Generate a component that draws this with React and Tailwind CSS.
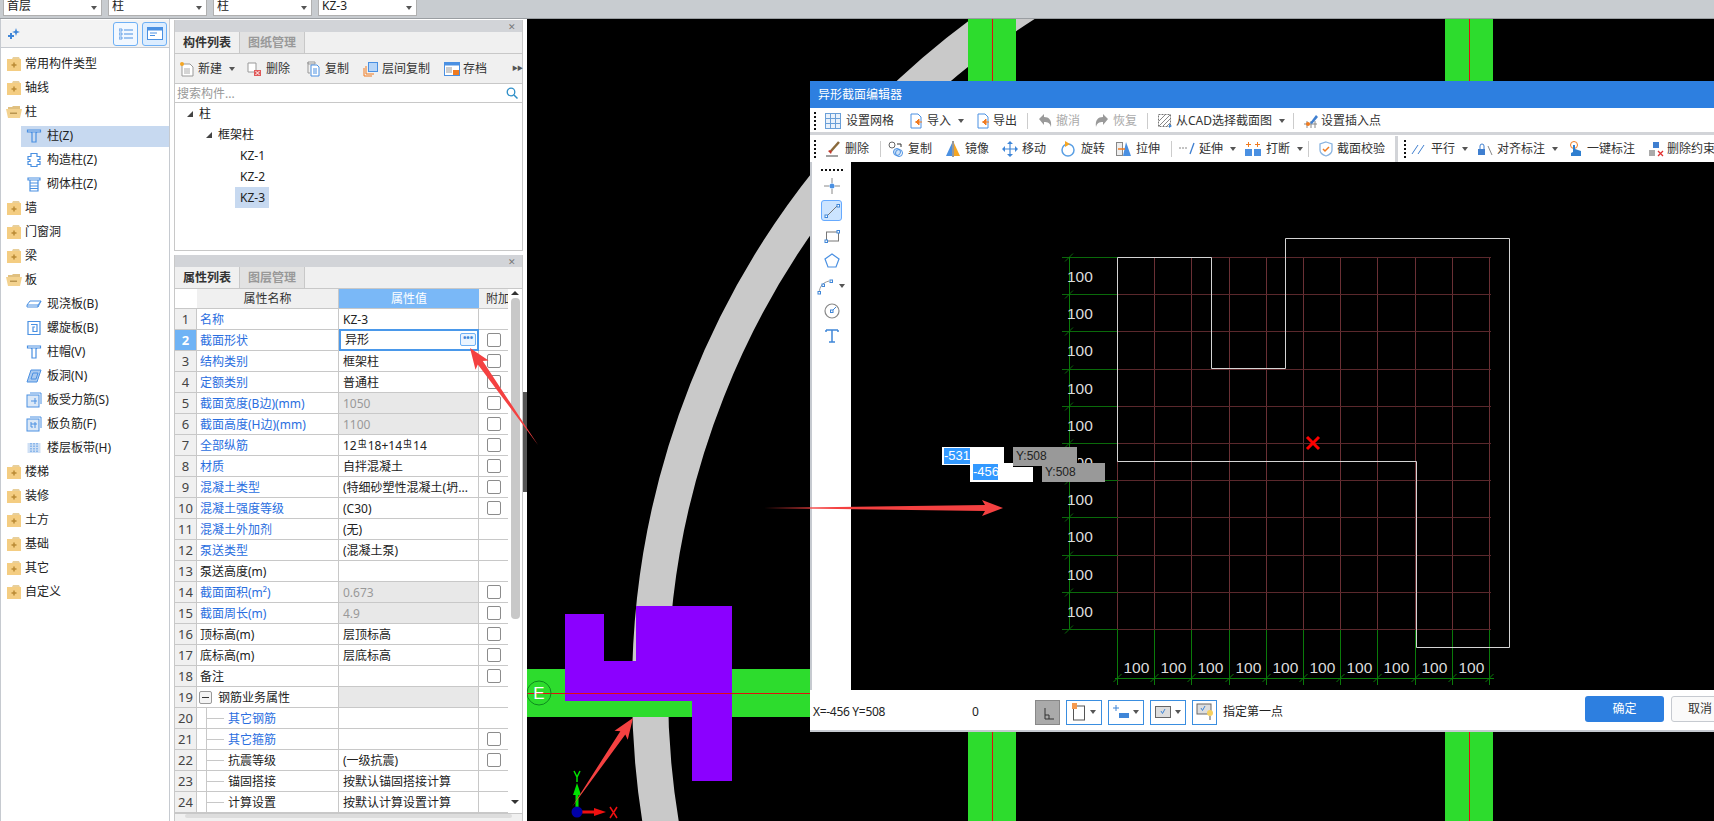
import React from 'react';

const FONT = "font-['Noto_Sans','Noto_Sans_CJK_SC',sans-serif]";

const Caret = ({ className = '' }) => (
  <span className={`inline-block w-0 h-0 border-x-[3px] border-x-transparent border-t-[4px] border-t-[#555] ${className}`} />
);

const Folder = ({ open }) => (
  <svg width="16" height="14" viewBox="0 0 16 14" className="shrink-0">
    {open ? (
      <>
        <path d="M2 2h4l1-1h7v9H2z" fill="#e0c080" />
        <path d="M0 4h16l-2 9H2z" fill="#f3d28f" />
        <rect x="4" y="7.500" width="7" height="1.500" fill="#b99550" />
      </>
    ) : (
      <>
        <path d="M1 2h5l1-2h6l1 2v1H1z" fill="#e8cf9a" />
        <rect x="1" y="2" width="14" height="12" fill="#f4cd82" />
        <path d="M5.500 8h5M8 5.500v5" stroke="#b98a35" strokeWidth="1.500" />
      </>
    )}
  </svg>
);

const b = '#4a90e2';

const leafIcons = {
  col: <><path d="M1.500 2h13v2h-13zM5 4l1 1v9h4V5l1-1" fill="none" stroke={b} strokeWidth="1.200" /></>,
  gz: <><path d="M5 1.500h6v3h3v3h-2v2h2v3h-3v2H5v-2H2v-3h2v-2H2v-3h3z" fill="none" stroke={b} strokeWidth="1.200" /></>,
  qt: <><path d="M2 2h12v2H2zM4 4h8v11H4zM4 7h8M4 10h8M4 12.500h8" fill="none" stroke={b} strokeWidth="1.200" /></>,
  xj: <><path d="M1 9l3-4h11l-1.500 3-1.500 3H1zM1 9h11l3-4M12 9v2" fill="none" stroke={b} strokeWidth="1" /></>,
  lx: <><path d="M2 1.500h12v13H2zM5 4.500h6v7H7V7h2" fill="none" stroke={b} strokeWidth="1.200" /></>,
  bd: <><path d="M1 14L5 2h10l-4 12zM5 11l2-6h5l-2 6z" fill="#a9c9ef" stroke={b} strokeWidth="1" /></>,
  sl: <><rect x="1" y="3" width="12" height="12" fill="#dbe8f7" stroke={b} /><path d="M4 1h11v11M5 9h6M9 6v6" fill="none" stroke={b} /></>,
  fj: <><rect x="1" y="3" width="12" height="12" fill="#dbe8f7" stroke={b} /><path d="M4 1h11v11M5 6v5h2M9 6v6M5 8h6" fill="none" stroke={b} /></>,
  bdai: <><rect x="1.500" y="3" width="13" height="10" fill="#cfe0f5" /><path d="M5 3v10M8 3v10M11 3v10" stroke={b} strokeDasharray="1.500 1" /></>,
};

const Leaf = ({ name }) => (
  <svg width="16" height="16" viewBox="0 0 16 16" className="shrink-0">{leafIcons[name]}</svg>
);

const TreeGroup = ({ label, open }) => (
  <div className="h-6 flex items-center pl-[5px] gap-[3px] text-xs text-[#222]">
    <Folder open={open} />
    <span>{label}</span>
  </div>
);

const TreeLeaf = ({ label, icon, active }) => (
  <div className="h-6 pl-[20px] flex items-center">
    <div className={`h-[21px] w-full flex items-center pl-[5px] gap-[5px] text-xs text-[#222] ${active ? 'bg-[#c7d9f0]' : ''}`}>
      <Leaf name={icon} />
      <span>{label}</span>
    </div>
  </div>
);

const LeftPanel = () => (
  <div className="w-[170px] shrink-0 border-l border-r border-[#c6cad0] bg-white">
    <div className="h-[28px] mt-px border-b border-[#c6cad0] bg-[#f3f3f3] flex items-center relative">
      <svg width="14" height="12" viewBox="0 0 14 12" className="ml-[6px]">
        <path d="M9 0l1 3 3 1-3 1-1 3-1-3-3-1 3-1zM3 5h2v2h2v2H5v2H3V9H1V7h2z" fill="#3f86d8" />
      </svg>
      <div className="ml-auto mr-[2px] flex gap-[4px]">
        <div className="w-[25px] h-[24px] rounded-[3px] border border-[#6eb0f5] bg-[#f2f8ff] flex items-center justify-center">
          <svg width="14" height="12" viewBox="0 0 14 12"><path d="M0 1h3v2H0zM0 5h3v2H0zM0 9h3v2H0z" fill="none" stroke="#4a90e2" strokeWidth=".8" /><path d="M5 2h9M5 6h9M5 10h9" stroke="#4a90e2" strokeWidth="1" /></svg>
        </div>
        <div className="w-[25px] h-[24px] rounded-[3px] border border-[#6eb0f5] bg-[#dcedff] flex items-center justify-center">
          <svg width="16" height="13" viewBox="0 0 16 13"><rect x=".5" y=".5" width="15" height="12" fill="#fff" stroke="#4a90e2" /><rect x=".5" y=".5" width="15" height="3" fill="#4a90e2" /><path d="M3 6h7M3 8.500h5" stroke="#4a90e2" /></svg>
        </div>
      </div>
    </div>
    <div className="pt-[4px]">
      <TreeGroup label="常用构件类型" />
      <TreeGroup label="轴线" />
      <TreeGroup label="柱" open />
      <TreeLeaf label="柱(Z)" icon="col" active />
      <TreeLeaf label="构造柱(Z)" icon="gz" />
      <TreeLeaf label="砌体柱(Z)" icon="qt" />
      <TreeGroup label="墙" />
      <TreeGroup label="门窗洞" />
      <TreeGroup label="梁" />
      <TreeGroup label="板" open />
      <TreeLeaf label="现浇板(B)" icon="xj" />
      <TreeLeaf label="螺旋板(B)" icon="lx" />
      <TreeLeaf label="柱帽(V)" icon="col" />
      <TreeLeaf label="板洞(N)" icon="bd" />
      <TreeLeaf label="板受力筋(S)" icon="sl" />
      <TreeLeaf label="板负筋(F)" icon="fj" />
      <TreeLeaf label="楼层板带(H)" icon="bdai" />
      <TreeGroup label="楼梯" />
      <TreeGroup label="装修" />
      <TreeGroup label="土方" />
      <TreeGroup label="基础" />
      <TreeGroup label="其它" />
      <TreeGroup label="自定义" />
    </div>
  </div>
);

const PanelHead = ({ first, second }) => (
  <>
    <div className="h-[12px] bg-[#d2d4d8] flex items-center justify-end pr-[6px] text-[9px] leading-none text-[#777]">✕</div>
    <div className="h-[22px] bg-[#f0f0f0] border-b border-[#c8c8c8] flex text-xs">
      <div className="w-[65px] flex items-center justify-center font-bold text-[#333] border-r border-[#c8c8c8]">{first}</div>
      <div className="w-[65px] flex items-center justify-center font-bold text-[#999] bg-[#e2e2e2] border-r border-[#c8c8c8]">{second}</div>
    </div>
  </>
);

const rows = [
  ['1', '名称', 'KZ-3', 'b', 0, 0],
  ['2', '截面形状', '异形', 'b', 0, 1],
  ['3', '结构类别', '框架柱', 'b', 0, 1],
  ['4', '定额类别', '普通柱', 'b', 0, 1],
  ['5', '截面宽度(B边)(mm)', '1050', 'b', 1, 1],
  ['6', '截面高度(H边)(mm)', '1100', 'b', 1, 1],
  ['7', '全部纵筋', 'rebar', 'b', 0, 1],
  ['8', '材质', '自拌混凝土', 'b', 0, 1],
  ['9', '混凝土类型', '(特细砂塑性混凝土(坍...', 'b', 0, 1],
  ['10', '混凝土强度等级', '(C30)', 'b', 0, 1],
  ['11', '混凝土外加剂', '(无)', 'b', 0, 0],
  ['12', '泵送类型', '(混凝土泵)', 'b', 0, 0],
  ['13', '泵送高度(m)', '', 'k', 0, 0],
  ['14', '截面面积(m²)', '0.673', 'b', 1, 1],
  ['15', '截面周长(m)', '4.9', 'b', 1, 1],
  ['16', '顶标高(m)', '层顶标高', 'k', 0, 1],
  ['17', '底标高(m)', '层底标高', 'k', 0, 1],
  ['18', '备注', '', 'k', 0, 1],
  ['19', '钢筋业务属性', '', 'g', 1, 0],
  ['20', '其它钢筋', '', 'cb', 0, 0],
  ['21', '其它箍筋', '', 'cb', 0, 1],
  ['22', '抗震等级', '(一级抗震)', 'ck', 0, 1],
  ['23', '锚固搭接', '按默认锚固搭接计算', 'ck', 0, 0],
  ['24', '计算设置', '按默认计算设置计算', 'ck', 0, 0],
];

const Row = ({ r }) => {
  const [num, name, val, kind, gray, check] = r;
  const sel = num === '2';
  const child = kind === 'cb' || kind === 'ck';
  return (
    <div className="h-[21px] flex border-b border-[#c8c8c8] text-xs">
      <div className={`w-[22px] shrink-0 flex items-center justify-center pt-px border-r border-[#c8c8c8] text-[13px] ${sel ? 'bg-[#6fb3f5] text-white font-bold' : 'bg-[#f0f0f0] text-[#444]'}`}>{num}</div>
      <div className={`w-[142px] shrink-0 relative flex items-center pt-px border-r border-[#c8c8c8] whitespace-nowrap ${kind === 'b' || kind === 'cb' ? 'text-[#2a6ee0]' : 'text-[#222]'} ${child ? 'pl-[31px]' : kind === 'g' ? 'pl-[21px]' : 'pl-[3px]'}`}>
        {kind === 'g' && (
          <span className="absolute left-[2px] top-[4px] w-[13px] h-[13px] rounded-[2px] border border-[#999] bg-[#f4f4f4] flex items-center justify-center">
            <span className="w-[7px] h-px bg-[#333]" />
          </span>
        )}
        {child && (
          <>
            <span className="absolute left-[9px] top-0 bottom-[-1px] w-px bg-[#c8c8c8]" />
            <span className="absolute left-[9px] top-[10px] w-[18px] h-px bg-[#c8c8c8]" />
          </>
        )}
        {name}
      </div>
      <div className={`w-[140px] shrink-0 flex items-center whitespace-nowrap overflow-hidden ${gray ? 'bg-[#e8e8e8] text-[#999]' : 'text-[#222]'} ${sel ? 'border-2 border-[#4a98ea] -mt-px h-[22px] pl-[4px] relative' : 'pl-[4px] pt-px border-r border-[#c8c8c8]'}`}>
        {val === 'rebar' ? (
          <span>12<span className="text-[9px] align-[3px] mx-[1px]">虫</span>18+14<span className="text-[9px] align-[3px] mx-[1px]">虫</span>14</span>
        ) : val}
        {sel && (
          <span className="absolute right-[1px] top-[2px] w-[16px] h-[13px] rounded-[2px] border border-[#6eb0f5] bg-[#eaf4ff] text-[#3f86d8] text-[9px] leading-[8px] text-center font-bold">•••</span>
        )}
      </div>
      <div className="w-[29px] shrink-0 flex items-center justify-center">
        {!!check && <span className="w-[14px] h-[14px] rounded-[2px] border border-[#8c8c8c] bg-white" />}
      </div>
    </div>
  );
};

const ToolIcon = ({ children }) => (
  <svg width="16" height="16" viewBox="0 0 16 16" className="shrink-0">{children}</svg>
);

const ListTool = ({ w, icon, label, caret }) => (
  <div className={`flex items-center shrink-0 text-xs text-[#333] ${w}`}>
    {icon}
    <span className="ml-[3px] whitespace-nowrap">{label}</span>
    {caret && <Caret className="ml-[7px]" />}
  </div>
);

const MiddlePanel = () => (
  <div className="w-[357px] shrink-0 bg-white flex">
    <div className="w-[4px]" />
    <div className="w-[349px] flex flex-col">
      <div className="h-[231px] mt-px border border-t-0 border-[#c8c8c8] flex flex-col">
        <PanelHead first="构件列表" second="图纸管理" />
        <div className="h-[30px] bg-[#f0f0f0] border-b border-[#c8c8c8] flex items-center pl-[4px]">
          <ListTool w="w-[68px]" label="新建" caret icon={<ToolIcon><path d="M3 3h8l3 3v9H3z" fill="#fff" stroke="#999" /><path d="M5 8h6M5 10h6M5 12h6" stroke="#aaa" /><circle cx="3" cy="3" r="2" fill="#f5a623" /></ToolIcon>} />
          <ListTool w="w-[59px]" label="删除" icon={<ToolIcon><path d="M1 2h8v9H1z" fill="#fff" stroke="#999" /><rect x="7" y="9" width="7" height="6" fill="#e05a5a" /><path d="M8.500 10l4 4M12.500 10l-4 4" stroke="#fff" /></ToolIcon>} />
          <ListTool w="w-[57px]" label="复制" icon={<ToolIcon><path d="M2 1h7v2H2zM2 1v11h2" fill="none" stroke="#999" /><path d="M5 4h6l2 2v9H5z" fill="#fff" stroke="#4a90e2" /><path d="M7 8h4M7 10h4M7 12h4" stroke="#4a90e2" /></ToolIcon>} />
          <ListTool w="w-[81px]" label="层间复制" icon={<ToolIcon><path d="M1 15V7M1 15h8M3 13V5M3 13h8" fill="none" stroke="#f07b20" /><rect x="5.500" y="1.500" width="9" height="9" fill="#b8d6f8" stroke="#4a90e2" /></ToolIcon>} />
          <ListTool w="w-[68px]" label="存档" icon={<ToolIcon><rect x=".5" y="1.500" width="15" height="13" fill="#fff" stroke="#4a90e2" /><rect x=".5" y="1.500" width="15" height="3" fill="#4a90e2" /><path d="M2 7h6M2 9h6M2 11h6" stroke="#999" /><rect x="9" y="9" width="6" height="5" fill="#f07b20" /></ToolIcon>} />
          <span className="text-[6px] text-[#555] tracking-[-1px]">▶▶</span>
        </div>
        <div className="h-[19px] border-b border-[#c8c8c8] flex items-center pl-[2px] pr-[4px] text-xs text-[#999]">
          <span className="pt-px">搜索构件...</span>
          <svg width="12" height="12" viewBox="0 0 12 12" className="ml-auto"><circle cx="5" cy="5" r="3.800" fill="none" stroke="#2f8fc8" strokeWidth="1.300" /><path d="M8 8l3.500 3.500" stroke="#2f8fc8" strokeWidth="1.500" /></svg>
        </div>
        <div className="flex-1 text-xs text-[#222]">
          <div className="h-[21px] flex items-center pl-[12px]"><span className="w-0 h-0 border-l-[6px] border-l-transparent border-b-[6px] border-b-[#444]" /><span className="ml-[6px]">柱</span></div>
          <div className="h-[21px] flex items-center pl-[31px]"><span className="w-0 h-0 border-l-[6px] border-l-transparent border-b-[6px] border-b-[#444]" /><span className="ml-[6px]">框架柱</span></div>
          <div className="h-[21px] flex items-center pl-[65px]">KZ-1</div>
          <div className="h-[21px] flex items-center pl-[65px]">KZ-2</div>
          <div className="h-[21px] flex items-center pl-[60px]"><span className="bg-[#c7d9f0] h-[21px] leading-[21px] pl-[5px] w-[34px] whitespace-nowrap">KZ-3</span></div>
        </div>
      </div>
      <div className="mt-[4px] flex-1 border-x border-[#c8c8c8] flex flex-col min-h-0">
        <PanelHead first="属性列表" second="图层管理" />
        <div className="flex flex-1 min-h-0">
          <div className="w-[333px] shrink-0 overflow-hidden">
            <div className="h-[20px] flex text-xs border-b border-[#c8c8c8]">
              <div className="w-[22px] bg-white" />
              <div className="w-[142px] bg-[#f0f0f0] border-r border-[#c8c8c8] flex items-center justify-center text-[#333]">属性名称</div>
              <div className="w-[140px] bg-[#7ab8f7] flex items-center justify-center text-white">属性值</div>
              <div className="w-[29px] bg-[#f0f0f0] pl-[7px] flex items-center overflow-hidden whitespace-nowrap text-[#333]">附加</div>
            </div>
            {rows.map((r) => <Row key={r[0]} r={r} />)}
          </div>
          <div className="flex-1 flex flex-col items-center pt-[2px] relative">
            <span className="w-0 h-0 border-x-[4px] border-x-transparent border-b-[4px] border-b-[#333]" />
            <div className="w-[9px] h-[321px] mt-[3px] rounded-[4px] bg-[#c8c8c8]" />
            <span className="absolute bottom-[9px] w-0 h-0 border-x-[4px] border-x-transparent border-t-[4px] border-t-[#333]" />
          </div>
        </div>
        <div className="h-[8px] shrink-0 bg-[#f0f0f0] border-t border-[#c8c8c8] px-[10px]"><div className="h-[4px] bg-[#ddd] rounded-[2px]" /></div>
      </div>
    </div>
    <div className="w-[4px] flex flex-col">
      <div className="h-[373px]" />
      <div className="h-[100px] bg-[#555]" />
    </div>
  </div>
);

const Background = () => (
  <svg className="absolute inset-0" width="1187" height="802" viewBox="527 19 1187 802">
    <circle cx="1465" cy="690" r="815" fill="none" stroke="#c9c9c9" strokeWidth="36" />
    <rect x="968" y="19" width="48" height="802" fill="#2ddc2d" />
    <rect x="1445" y="19" width="48" height="802" fill="#2ddc2d" />
    <path d="M992.500 19v802M1469.500 19v802" stroke="#e01010" />
    <rect x="527" y="669" width="1187" height="48" fill="#2ddc2d" />
    <path d="M565 614h39v47h32v-55h96v175h-40v-80h-127z" fill="#8b00ff" />
    <path d="M527 693.500h1187" stroke="#e01010" />
    <circle cx="539" cy="693" r="12" fill="none" stroke="#0e8a1e" />
    <text x="539" y="699" textAnchor="middle" fill="#fff" fontSize="17" fontFamily="Liberation Sans">E</text>
    <path d="M577 812v-20" stroke="#00e000" strokeWidth="3" />
    <path d="M577 783l-4 12h8z" fill="#00e000" />
    <path d="M574 771l3 6 3-6M577 777v5" fill="none" stroke="#00e000" strokeWidth="1.500" />
    <path d="M577 812h20" stroke="#f01010" strokeWidth="3" />
    <path d="M606 812l-12-4v8z" fill="#f01010" />
    <path d="M610 807l7 11M617 807l-7 11" stroke="#f01010" strokeWidth="1.500" />
    <circle cx="577" cy="812" r="5.500" fill="#0000a8" />
  </svg>
);

const gridX = Array.from({ length: 11 }, (_, i) => Math.round(1117 + i * 37.2) + 0.5);
const gridY = Array.from({ length: 11 }, (_, i) => Math.round(257 + i * 37.2) + 0.5);

const SectionGrid = () => (
  <svg className="absolute inset-0" width="863" height="528" viewBox="851 162 863 528">
    {gridX.map((x) => <path key={x} d={`M${x} 257V629`} stroke="#6a3035" />)}
    {gridY.map((y) => <path key={y} d={`M1118 ${y}H1491`} stroke="#5a282c" />)}
    {gridY.map((y) => <path key={y} d={`M1062 ${y}H1118M1065 ${y + 4}l8 -8`} stroke="#0a6a0a" />)}
    <path d="M1069.500 257V629" stroke="#0a7a0a" />
    {gridX.map((x) => <path key={x} d={`M${x} 630V685M${x - 4} 682l8 -8`} stroke="#0a7a0a" />)}
    <path d="M1115 678.500H1494" stroke="#0a7a0a" />
    {gridY.slice(0, 10).map((y) => (
      <text key={y} x="1067" y={y + 24} fill="#dcdcdc" fontSize="15.500" fontFamily="Liberation Sans">100</text>
    ))}
    {gridX.slice(0, 10).map((x) => (
      <text key={x} x={x + 6} y="673" fill="#dcdcdc" fontSize="15.500" fontFamily="Liberation Sans">100</text>
    ))}
    <path d="M1117.500 257.500H1211.500V368.500H1285.500V238.500H1509.500V647.500H1416.500V461.500H1117.500Z" fill="none" stroke="#d4d4d4" />
    <path d="M1307 437l12 12M1319 437l-12 12" stroke="#f00" strokeWidth="3" />
  </svg>
);

const Tool = ({ w, icon, iw, label, caret, muted }) => (
  <div className={`flex items-center shrink-0 text-xs ${muted ? 'text-[#aaa]' : 'text-[#333]'} ${w}`}>
    <div className={`shrink-0 ${iw}`}>{icon}</div>
    <span className="whitespace-nowrap">{label}</span>
    {caret && <Caret className="ml-[7px]" />}
  </div>
);

const Sep = ({ w }) => (
  <div className={`shrink-0 h-[16px] ${w}`}><div className="w-px h-full bg-[#ccc]" /></div>
);

const Grip = ({ w = 'w-[15px]' }) => (
  <div className={`shrink-0 flex flex-col gap-[2px] pl-[4px] ${w}`}>
    {[0, 1, 2, 3, 4].map((i) => <span key={i} className="w-[2px] h-[2px] bg-[#111]" />)}
  </div>
);

const fileArrow = <ToolIcon><path d="M2 1h7l3 3v11H2z" fill="#fff" stroke="#4a90e2" /><path d="M6 9h7M7 9l3-3v6z" fill="#f07b20" stroke="#f07b20" /></ToolIcon>;

const DialogToolbars = () => (
  <div className="bg-white">
    <div className="h-[24px] pt-[2px] flex items-center">
      <Grip />
      <Tool w="w-[84px]" iw="w-[21px]" label="设置网格" icon={<ToolIcon><rect x=".5" y=".5" width="15" height="15" fill="#eaf2fb" stroke="#6a9fd8" /><path d="M5.500 0v16M10.500 0v16M0 5.500h16M0 10.500h16" stroke="#6a9fd8" /></ToolIcon>} />
      <Tool w="w-[67px]" iw="w-[18px]" label="导入" caret icon={fileArrow} />
      <Tool w="w-[51px]" iw="w-[17px]" label="导出" icon={fileArrow} />
      <Sep w="w-[11px]" />
      <Tool w="w-[55px]" iw="w-[18px]" label="撤消" muted icon={<ToolIcon><path d="M1 6l5-5v3c5 0 8 3 7 10-1-4-3-5-7-5v3z" fill="#9a9a9a" /></ToolIcon>} />
      <Tool w="w-[54px]" iw="w-[20px]" label="恢复" muted icon={<ToolIcon><path d="M15 6l-5-5v3C5 4 2 7 3 14c1-4 3-5 7-5v3z" fill="#9a9a9a" /></ToolIcon>} />
      <Sep w="w-[10px]" />
      <Tool w="w-[136px]" iw="w-[19px]" label="从CAD选择截面图" caret icon={<ToolIcon><rect x="1.500" y="1.500" width="12" height="12" fill="none" stroke="#777" strokeDasharray="2 1" /><path d="M2 8l6-6M2 13L13 2M6 13l7-7M10 13l3-3" stroke="#888" /><path d="M12 11l3 2-3 2z" fill="#3f86d8" /></ToolIcon>} />
      <Sep w="w-[10px]" />
      <Tool iw="w-[18px]" label="设置插入点" icon={<ToolIcon><path d="M1 11h13M4 8v7M8 8v7M12 8v7" stroke="#888" /><path d="M7 10L13 2l2 2-6 7z" fill="#3f7fd0" /><circle cx="5" cy="11" r="2" fill="#f07b20" /></ToolIcon>} />
    </div>
    <div className="h-[3px] bg-[#d2d4d8]" />
    <div className="h-[26px] pt-px flex items-center">
      <Grip />
      <Tool w="w-[55px]" iw="w-[20px]" label="删除" icon={<ToolIcon><path d="M14 1L6 10" stroke="#8a6a3c" strokeWidth="2.500" /><path d="M3 10l3 3 1-3-2-1z" fill="#c0392b" /><path d="M1 15h12" stroke="#444" /></ToolIcon>} />
      <Sep w="w-[8px]" />
      <Tool w="w-[57px]" iw="w-[20px]" label="复制" icon={<ToolIcon><circle cx="4" cy="4" r="3" fill="#fff" stroke="#666" /><circle cx="9" cy="11" r="3.500" fill="#cfe3f8" stroke="#4a90e2" /><circle cx="11" cy="12" r="3.500" fill="none" stroke="#4a90e2" /><path d="M9 3h4v3" fill="none" stroke="#333" /></ToolIcon>} />
      <Tool w="w-[57px]" iw="w-[20px]" label="镜像" icon={<ToolIcon><path d="M1 15L7 2v13z" fill="#4a90e2" /><path d="M9 2l6 13H9z" fill="#f5a623" /><path d="M8 0v16" stroke="#333" /></ToolIcon>} />
      <Tool w="w-[58px]" iw="w-[20px]" label="移动" icon={<ToolIcon><path d="M8 1v14M1 8h14" stroke="#3f86d8" strokeWidth="1.200" /><path d="M8 0l3 3H5zM8 16l3-3H5zM0 8l3-3v6zM16 8l-3-3v6z" fill="#3f86d8" /></ToolIcon>} />
      <Tool w="w-[56px]" iw="w-[21px]" label="旋转" icon={<ToolIcon><circle cx="8" cy="9" r="6" fill="none" stroke="#5a9fe4" strokeWidth="1.500" /><path d="M5 0l5 3-5 3z" fill="#f5a623" /></ToolIcon>} />
      <Tool w="w-[55px]" iw="w-[20px]" label="拉伸" icon={<ToolIcon><rect x=".5" y="1.500" width="6" height="13" fill="#eee" stroke="#888" /><path d="M10 1l5 14H7z" fill="#4a90e2" /><path d="M2 8h7" stroke="#f07b20" strokeWidth="1.500" /></ToolIcon>} />
      <Sep w="w-[8px]" />
      <Tool w="w-[66px]" iw="w-[20px]" label="延伸" caret icon={<ToolIcon><path d="M0 7h9" stroke="#888" strokeDasharray="2 1" /><path d="M11 13l4-11" stroke="#3f7fd0" strokeWidth="1.300" /></ToolIcon>} />
      <Tool w="w-[63px]" iw="w-[21px]" label="打断" caret icon={<ToolIcon><rect x="0" y="8" width="7" height="7" fill="#4a90e2" /><rect x="9" y="8" width="7" height="7" fill="#4a90e2" /><path d="M3.500 1v5M1 3.500h5M12.500 1v5M10 3.500h5" stroke="#f07b20" /></ToolIcon>} />
      <Sep w="w-[10px]" />
      <Tool w="w-[77px]" iw="w-[19px]" label="截面校验" icon={<ToolIcon><path d="M8 1l6 2v6c0 3-3 5-6 6-3-1-6-3-6-6V3z" fill="#fff" stroke="#8ab4e0" strokeWidth="1.300" /><path d="M5 8l2 2 4-4" fill="none" stroke="#f07b20" strokeWidth="1.500" /></ToolIcon>} />
      <div className="w-[3px] h-[26px] bg-[#d2d4d8] shrink-0" />
      <div className="w-[2px] shrink-0" />
      <Grip w="w-[11px]" />
      <Tool w="w-[66px]" iw="w-[20px]" label="平行" caret icon={<ToolIcon><path d="M1 13L7 4M7 13l6-9" stroke="#3f7fd0" /></ToolIcon>} />
      <Tool w="w-[91px]" iw="w-[20px]" label="对齐标注" caret icon={<ToolIcon><path d="M3 8V5a2 2 0 014 0v3" fill="none" stroke="#3f7fd0" /><rect x="1" y="8" width="7" height="6" fill="#3f7fd0" /><path d="M11 5l4 9" stroke="#888" /></ToolIcon>} />
      <Tool w="w-[80px]" iw="w-[19px]" label="一键标注" icon={<ToolIcon><circle cx="6" cy="4" r="3.500" fill="none" stroke="#f07b20" /><path d="M5 4v7l-2 1v3h10v-5l-6-2V4z" fill="#2f7fd0" /></ToolIcon>} />
      <Tool iw="w-[19px]" label="删除约束" icon={<ToolIcon><rect x="5" y="1" width="6" height="6" fill="#3f7fd0" /><rect x="1" y="9" width="6" height="6" fill="#aaa" /><path d="M10 10l5 5M15 10l-5 5" stroke="#e03030" strokeWidth="1.300" /></ToolIcon>} />
    </div>
  </div>
);

function SideBtn({ children, active }) {
  return (
    <div className={`w-[21px] h-[21px] rounded-[3px] flex items-center justify-center ${active ? 'bg-[#cce4ff] border border-[#66aaff]' : ''}`}>
      <svg width="18" height="18" viewBox="0 0 18 18">{children}</svg>
    </div>
  );
}

const SideTools = () => (
  <div className="w-[41px] shrink-0 bg-white border-l-2 border-[#c6cad0] flex flex-col items-center">
    <div className="flex gap-[2px] mt-[7px] mb-[4px]">
      {[0, 1, 2, 3, 4, 5].map((i) => <span key={i} className="w-[2px] h-[2px] bg-[#111]" />)}
    </div>
    <div className="flex flex-col gap-[4px]">
      <SideBtn><path d="M1 9h5M12 9h5M9 1v5M9 12v5" stroke="#888" /><circle cx="9" cy="9" r="2.500" fill="#4a90e2" /></SideBtn>
      <SideBtn active><path d="M4 14L14 4" stroke="#777" /><rect x="2" y="13" width="2.500" height="2.500" fill="#fff" stroke="#3f86d8" /><rect x="14" y="2.500" width="2.500" height="2.500" fill="#fff" stroke="#3f86d8" /></SideBtn>
      <SideBtn><rect x="3.500" y="5" width="12" height="9" fill="none" stroke="#777" /><rect x="2" y="13" width="2.500" height="2.500" fill="#fff" stroke="#3f86d8" /><rect x="14" y="3.500" width="2.500" height="2.500" fill="#fff" stroke="#3f86d8" /></SideBtn>
      <SideBtn><path d="M9 2l7 5-3 8H5L2 7z" fill="none" stroke="#4a90e2" strokeWidth="1.200" /></SideBtn>
      <div className="w-[29px] -mx-[4px] h-[21px] rounded-[2px] flex items-center relative">
        <svg width="20" height="18" viewBox="0 0 20 18"><path d="M2 16C3 9 5 6 12 4" fill="none" stroke="#999" /><rect x="1" y="14.500" width="2.500" height="2.500" fill="#fff" stroke="#3f86d8" /><rect x="5" y="7" width="2.500" height="2.500" fill="#fff" stroke="#3f86d8" /><rect x="13" y="3" width="2.500" height="2.500" fill="#fff" stroke="#3f86d8" /></svg>
        <Caret className="absolute right-[1px] top-[9px]" />
      </div>
      <SideBtn><circle cx="9" cy="9" r="7" fill="none" stroke="#888" strokeWidth="1.200" /><rect x="7.500" y="8" width="2.500" height="2.500" fill="#fff" stroke="#3f86d8" /><path d="M10 8l3-3" stroke="#3f86d8" /></SideBtn>
      <SideBtn><path d="M3 3h12M9 3v12M6 15h6M3 3v2M15 3v2" fill="none" stroke="#3f86d8" strokeWidth="1.500" /></SideBtn>
    </div>
  </div>
);

const StatusBox = ({ w, caret, children }) => (
  <div className={`h-[25px] border border-[#3a8ee0] flex items-center justify-center gap-[4px] ${w}`}>
    {children}
    {caret && <Caret />}
  </div>
);

const Dialog = () => (
  <div className="absolute left-[283px] top-[62px] w-[904px] h-[651px] flex flex-col border-b-2 border-[#c6cad0] bg-white">
    <div className="h-[27px] pt-px shrink-0 bg-[#2d7fe0] text-white text-xs flex items-center pl-[8px]">异形截面编辑器</div>
    <DialogToolbars />
    <div className="flex h-[528px] shrink-0 mt-px overflow-hidden">
      <SideTools />
      <div className="flex-1 bg-black relative">
        <SectionGrid />
        <div className="absolute left-[91px] top-[285px] w-[63px] h-[19px] bg-white border-r border-b border-black pl-[2px] py-[1px]">
          <span className="block w-[26px] h-[16px] bg-[#3399ff] text-white text-[13px] leading-[16px] font-['Liberation_Sans',sans-serif]">-531</span>
        </div>
        <div className="absolute left-[119px] top-[301px] w-[63px] h-[19px] bg-white pl-[3px] py-[1px]">
          <span className="block w-[25px] h-[16px] bg-[#3399ff] text-white text-[13px] leading-[16px] font-['Liberation_Sans',sans-serif]">-456</span>
        </div>
        <div className="absolute left-[162px] top-[285px] w-[65px] h-[20px] bg-[#999] border-r border-b border-black pl-[3px] text-[#222] text-xs leading-[19px] font-['Liberation_Sans',sans-serif]">Y:508</div>
        <div className="absolute left-[191px] top-[301px] w-[63px] h-[19px] bg-[#999] pl-[3px] text-[#222] text-xs leading-[19px] font-['Liberation_Sans',sans-serif]">Y:508</div>
      </div>
    </div>
    <div className="flex-1 flex items-center pt-[4px] text-xs text-[#222]">
      <span className="w-[225px] pl-[3px] flex shrink-0 tracking-[-0.3px]">
        <span className="w-[159px]">X=-456 Y=508</span>
        <span>0</span>
      </span>
      <div className="flex items-center gap-[6px]">
        <div className="w-[25px] h-[25px] border border-[#888] bg-[#aaa] flex items-end justify-center pb-[3px]">
          <svg width="14" height="14" viewBox="0 0 14 14"><path d="M4 1v11h9M4 8h4v4" fill="none" stroke="#333" /></svg>
        </div>
        <StatusBox w="w-[36px]" caret><svg width="14" height="18" viewBox="0 0 14 18"><rect x="1.500" y="3" width="11" height="14" fill="#fff" stroke="#555" /><rect x="0" y="0" width="5" height="6" fill="#f59a4f" /></svg></StatusBox>
        <StatusBox w="w-[36px]" caret><svg width="16" height="16" viewBox="0 0 16 16"><path d="M3 1v6M0 4h6" stroke="#3f86d8" /><rect x="6" y="9" width="10" height="5" fill="#3f86d8" /></svg></StatusBox>
        <StatusBox w="w-[36px]" caret><svg width="16" height="12" viewBox="0 0 16 12"><rect x=".5" y=".5" width="15" height="11" fill="#ddd" stroke="#666" /><path d="M6 5l1.500 2.500L10 3" fill="none" stroke="#3f86d8" /></svg></StatusBox>
        <StatusBox w="w-[25px]"><svg width="18" height="20" viewBox="0 0 18 20"><rect x="1" y="2" width="14" height="10" fill="#ddd" stroke="#666" /><path d="M5 6l1.500 2.500L9 4" fill="none" stroke="#3f86d8" /><circle cx="14" cy="11" r="3" fill="#f5d060" /><rect x="13" y="14" width="2" height="4" fill="#aaa" /></svg></StatusBox>
      </div>
      <span className="ml-[6px]">指定第一点</span>
      <div className="ml-auto flex gap-[7px] mb-[6px] -mr-[11px]">
        <div className="w-[79px] h-[26px] rounded-[3px] bg-[#2d7fe0] text-white flex items-center justify-center">确定</div>
        <div className="w-[54px] h-[26px] rounded-[3px] border border-[#c6cad0] bg-[#fafafa] text-[#333] flex items-center pl-[16px] whitespace-nowrap">取消</div>
      </div>
    </div>
  </div>
);

// 红色标注箭头
const arrowPoints = (x1, y1, x2, y2) => {
  const len = Math.hypot(x2 - x1, y2 - y1);
  const ux = (x2 - x1) / len;
  const uy = (y2 - y1) / len;
  const px = -uy;
  const py = ux;
  const at = (d, w) => `${x1 + ux * d + px * w},${y1 + uy * d + py * w}`;
  const n = len - 18;
  return [at(0, 0), at(n, 3), at(n - 3, 8), at(len, 0), at(n - 3, -8), at(n, -3)].join(' ');
};

const Annotations = () => (
  <svg className="absolute inset-0 pointer-events-none" width="1714" height="821" viewBox="0 0 1714 821">
    <polygon points={arrowPoints(572, 807, 633, 718)} fill="#f44141" />
    <polygon points={arrowPoints(538, 445, 470, 348)} fill="#f44141" />
    <polygon points={arrowPoints(764, 508, 1003, 508)} fill="#f44141" />
  </svg>
);

const TopBar = () => (
  <div className="h-[19px] shrink-0 bg-[#c8ccd0] border-b border-[#9a9ea2] flex gap-[6px] pl-[3px] text-[#222] text-xs">
    {['首层', '柱', '柱', 'KZ-3'].map((t, i) => (
      <div key={i} className="w-[99px] h-[16px] bg-white border border-t-0 border-[#b0b0b0] flex items-center pl-[3px] pr-[4px]">
        <span className="-mt-[4px]">{t}</span>
        <Caret className="ml-auto" />
      </div>
    ))}
  </div>
);

export default function App() {
  return (
    <div className={`relative w-[1714px] h-[821px] overflow-hidden flex flex-col bg-white ${FONT}`}>
      <TopBar />
      <div className="flex-1 flex min-h-0">
        <LeftPanel />
        <MiddlePanel />
        <div className="flex-1 bg-black relative overflow-hidden">
          <Background />
          <Dialog />
        </div>
      </div>
      <Annotations />
    </div>
  );
}
